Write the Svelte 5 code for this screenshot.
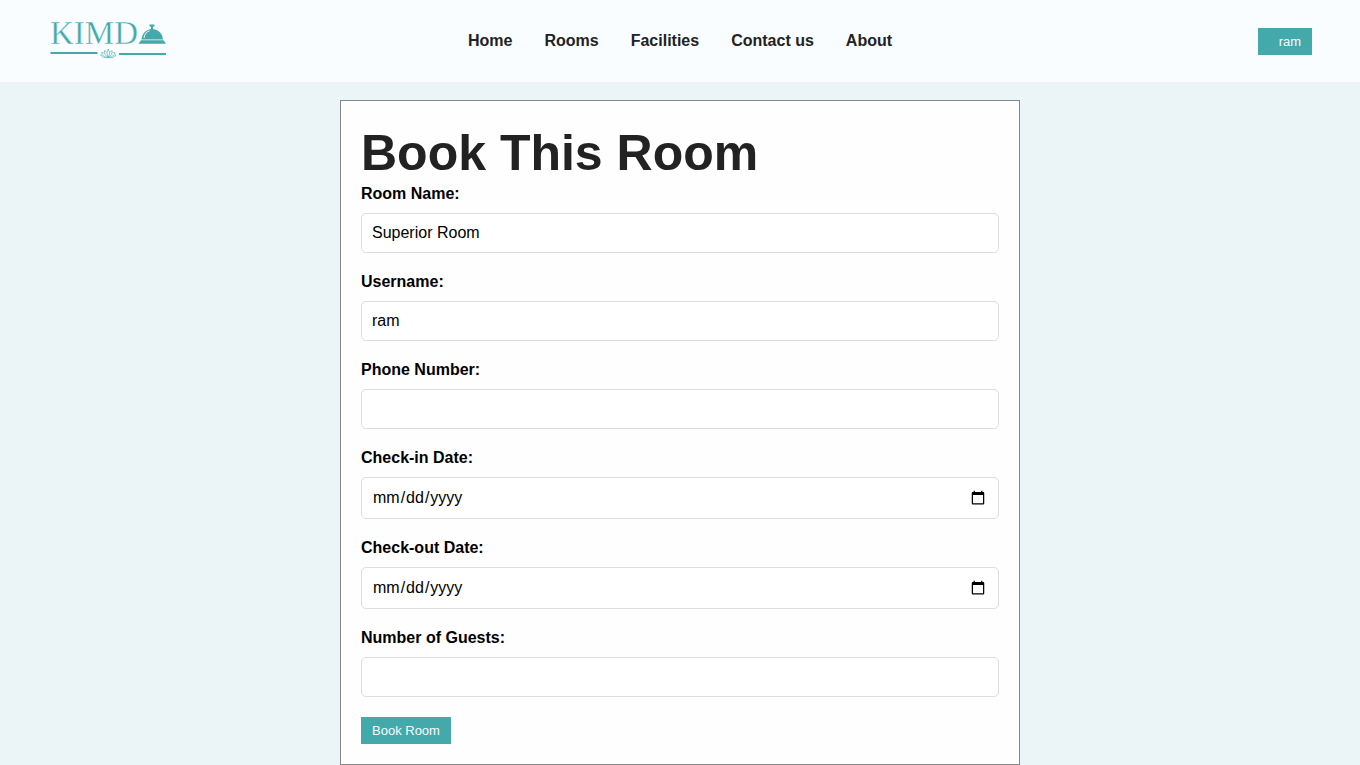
<script>
  const links = ['Home', 'Rooms', 'Facilities', 'Contact us', 'About'];
  const fields = [
    { id: 'room', label: 'Room Name:', type: 'text', value: 'Superior Room' },
    { id: 'username', label: 'Username:', type: 'text', value: 'ram' },
    { id: 'phone', label: 'Phone Number:', type: 'tel', value: '' },
    { id: 'checkin', label: 'Check-in Date:', type: 'date', value: '' },
    { id: 'checkout', label: 'Check-out Date:', type: 'date', value: '' },
    { id: 'guests', label: 'Number of Guests:', type: 'number', value: '' }
  ];
</script>

<header>
  <div class="side">
    <a class="logo" href="#home" aria-label="Kimd home">
      <svg width="120" height="58" viewBox="0 0 120 58">
        <text x="2" y="32" font-size="33">KIMD</text>
        <path d="M101.500 12.500H106.500V14.500H105V17C111 18 114.500 22 115 27.500H93.500C94 22 97.500 18 103 17V14.500H101.500Z" />
        <path d="M96 26C96.500 22 98.500 19.800 101.500 18.800" fill="none" stroke="#f9fdff" stroke-width="1" />
        <path d="M93 28.200H115.500L118 31.700H90.500Z" />
        <path d="M2.500 41H49.500M71 42H118" fill="none" stroke="#43a9ab" stroke-width="2" />
        <g fill="none" stroke="#43a9ab" stroke-width=".6" stroke-linejoin="round">
          <path d="M60.300 37Q57.500 40.500 60.300 45.500Q63.100 40.500 60.300 37Z" />
          <path d="M58.500 40L56.500 38.500Q55.500 43 60.300 45.500Q65.100 43 64.100 38.500L62.100 40" />
          <path d="M56.300 41L53.500 40.500Q54.500 45 60.300 45.500Q66.100 45 67.100 40.500L64.300 41" />
          <path d="M54 43H52.500Q55 46.500 60.300 45.500Q65.600 46.500 68.100 43H66.600" />
        </g>
      </svg>
    </a>
  </div>
  <nav>
    {#each links as link}
      <a href="#{link.toLowerCase().replace(' ', '-')}">{link}</a>
    {/each}
  </nav>
  <div class="side end">
    <button class="btn user" type="button">ram</button>
  </div>
</header>

<main>
  <form onsubmit={(e) => e.preventDefault()}>
    <h1>Book This Room</h1>
    {#each fields as field}
      <label for={field.id}>{field.label}</label>
      <input id={field.id} type={field.type} value={field.value} />
    {/each}
    <button class="btn" type="submit">Book Room</button>
  </form>
</main>

<style>
  :global(body) {
    background: #ebf5f7;
    font-family: "Liberation Sans", Arial, sans-serif;
    font-size: 16px;
    line-height: 18px;
    color: #000;
  }
  header {
    display: flex;
    align-items: center;
    height: 82px;
    padding: 0 48px;
    box-sizing: border-box;
    background: #f9fdff;
  }
  .side {
    flex: 1;
    display: flex;
  }
  .end {
    justify-content: flex-end;
  }
  .logo svg {
    display: block;
    fill: #43a9ab;
    font-family: "Liberation Serif", serif;
  }
  .logo text {
    stroke: #f9fdff;
    stroke-width: 0.4px;
  }
  nav {
    display: flex;
    gap: 32px;
  }
  nav a {
    color: #222;
    font-weight: bold;
    text-decoration: none;
  }
  form {
    box-sizing: border-box;
    width: 50%;
    margin: 18px auto 0;
    padding: 20px;
    border: 1px solid #888;
    background: #fefefe;
  }
  h1 {
    margin: 0;
    font-size: 50px;
    line-height: 64px;
    color: #222;
  }
  label {
    display: block;
    margin-bottom: 10px;
    font-weight: bold;
  }
  input {
    display: block;
    box-sizing: border-box;
    width: 100%;
    height: 40px;
    margin: 0 0 20px;
    padding: 10px;
    border: 1px solid #ddd;
    border-radius: 5px;
    background: #fff;
    color: #000;
    font: inherit;
  }
  input[type="date"] {
    height: 42px;
  }
  .btn {
    display: block;
    padding: 6px 11px;
    border: 0;
    background: #43a9ab;
    color: #f9fdff;
    font-family: inherit;
    font-size: 13px;
    line-height: 15px;
  }
  .user {
    padding-left: 21px;
  }
</style>
